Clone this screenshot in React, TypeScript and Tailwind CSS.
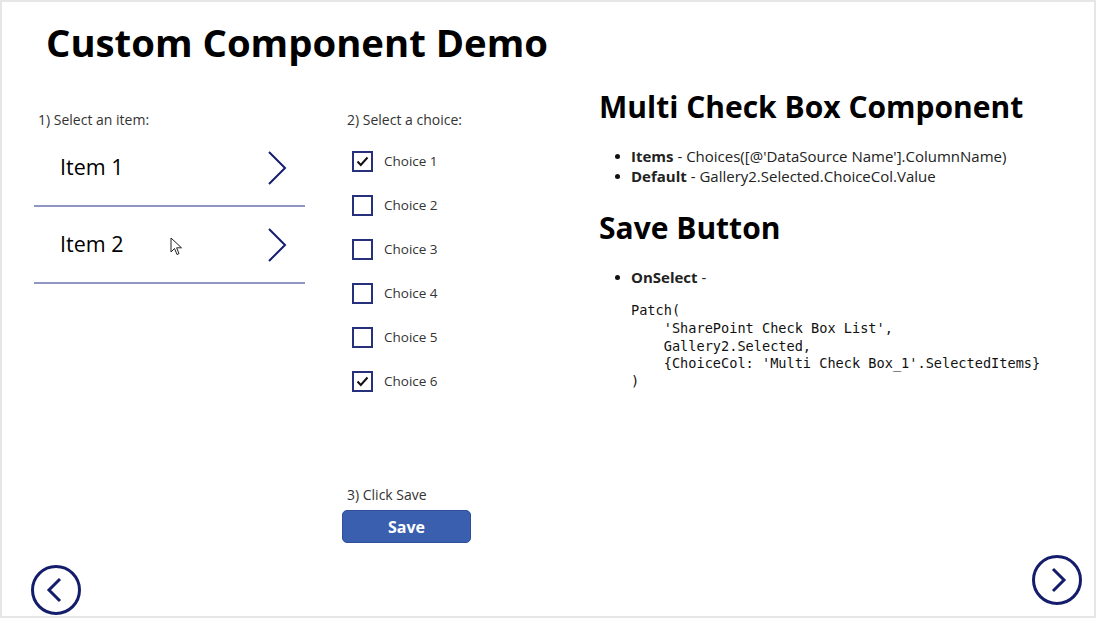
import React from "react";

const NAVY = "#141d6b";

function Chevron() {
  return (
    <svg width="20" height="34" viewBox="0 0 20 34" fill="none" className="mr-[-2px]">
      <path d="M2 1 L18 17 L2 33" stroke={NAVY} strokeWidth="2" />
    </svg>
  );
}

function CheckBox({ checked, label }: { checked: boolean; label: string }) {
  return (
    <div className="flex items-center h-[44px]">
      <div className="w-[21px] h-[21px] border-2 border-[#27307a] flex items-center justify-center ml-[10px]">
        {checked && (
          <svg width="13" height="11" viewBox="0 0 13 11" fill="none">
            <path d="M1.5 5.5 L4.8 9 L11.5 1.5" stroke="#111" strokeWidth="2" />
          </svg>
        )}
      </div>
      <span className="ml-[11px] text-[13.5px] text-[#333]">{label}</span>
    </div>
  );
}

function Cursor() {
  return (
    <svg width="14" height="20" viewBox="0 0 14 20" className="ml-[46px] mt-[4px]">
      <path d="M1 1 L1 15 L4.5 11.5 L7 17.5 L9 16.6 L6.6 10.8 L11.5 10.8 Z" fill="#fff" stroke="#222" strokeWidth="1" strokeLinejoin="round" />
    </svg>
  );
}

function Bullet({ children }: { children: React.ReactNode }) {
  return (
    <li className="flex items-center">
      <span className="w-[5px] h-[5px] rounded-full bg-[#111] mr-[11px]" />
      <span>{children}</span>
    </li>
  );
}

export default function App() {
  const choices = [
    ["Choice 1", true],
    ["Choice 2", false],
    ["Choice 3", false],
    ["Choice 4", false],
    ["Choice 5", false],
    ["Choice 6", true],
  ] as const;
  return (
    <div
      className="w-[1096px] h-[618px] border-2 border-[#e6e6e6] bg-white flex flex-col overflow-hidden"
      style={{ fontFamily: '"Open Sans", "Noto Sans", sans-serif' }}
    >
      <h1 className="text-[38.3px] font-bold leading-[44px] text-black ml-[44px] mt-[18px]">
        Custom Component Demo
      </h1>
      <div className="flex flex-1 min-h-0">
        {/* column 1 */}
        <div className="ml-[32px] w-[271px] mt-[47px]">
          <div className="text-[14px] text-[#333] ml-[4px] leading-[18px]">1) Select an item:</div>
          <div className="mt-[1px]">
            <div className="h-[77px] border-b-2 border-[#8f96c2] flex items-center pl-[26px] pr-[20px]">
              <span className="text-[21.5px] text-black">Item 1</span>
              <div className="flex-1" />
              <Chevron />
            </div>
            <div className="h-[77px] border-b-2 border-[#8f96c2] flex items-center pl-[26px] pr-[20px]">
              <span className="text-[21.5px] text-black">Item 2</span>
              <Cursor />
              <div className="flex-1" />
              <Chevron />
            </div>
          </div>
        </div>
        {/* column 2 */}
        <div className="ml-[37px] w-[220px] mt-[47px] flex flex-col">
          <div className="text-[14px] text-[#333] ml-[5px] leading-[18px]">2) Select a choice:</div>
          <div className="mt-[10px]">
            {choices.map(([l, c]) => (
              <CheckBox key={l} label={l} checked={c} />
            ))}
          </div>
          <div className="text-[14px] text-[#333] ml-[5px] leading-[18px] mt-[83px]">3) Click Save</div>
          <button className="mt-[6px] w-[129px] h-[33px] rounded-[5px] bg-[#3b5faf] border border-[#2f4f9a] text-white font-bold text-[16px] leading-none">
            Save
          </button>
        </div>
        {/* column 3 */}
        <div className="ml-[37px] flex-1 mt-[23px] text-[15px] text-[#222]">
          <h2 className="text-[30px] font-bold leading-[40px] text-black">Multi Check Box Component</h2>
          <ul className="mt-[19px] ml-[16px] leading-[20px]">
            <Bullet><b>Items</b> - Choices([@'DataSource Name'].ColumnName)</Bullet>
            <Bullet><b>Default</b> - Gallery2.Selected.ChoiceCol.Value</Bullet>
          </ul>
          <h2 className="text-[30px] font-bold leading-[40px] text-black mt-[22px]">Save Button</h2>
          <ul className="mt-[19px] ml-[16px] leading-[20px]">
            <Bullet><b>OnSelect</b> -</Bullet>
          </ul>
          <pre
            className="ml-[32px] mt-[15px] text-[13.6px] leading-[17.8px] text-[#111]"
            style={{ fontFamily: '"DejaVu Sans Mono", "Liberation Mono", monospace' }}
          >{`Patch(
    'SharePoint Check Box List',
    Gallery2.Selected,
    {ChoiceCol: 'Multi Check Box_1'.SelectedItems}
)`}</pre>
        </div>
      </div>
      <div className="flex justify-between items-end px-[28px] h-[70px] shrink-0">
        <svg width="52" height="52" viewBox="0 0 52 52" fill="none">
          <circle cx="26" cy="26" r="23.5" stroke={NAVY} strokeWidth="3" />
          <path d="M30 15 L19 26 L30 37" stroke={NAVY} strokeWidth="3" />
        </svg>
        <svg width="52" height="52" viewBox="0 0 52 52" fill="none" className="mb-[10px] mr-[-17px]">
          <circle cx="26" cy="26" r="23.5" stroke={NAVY} strokeWidth="3" />
          <path d="M22 15 L33 26 L22 37" stroke={NAVY} strokeWidth="3" />
        </svg>
      </div>
    </div>
  );
}
